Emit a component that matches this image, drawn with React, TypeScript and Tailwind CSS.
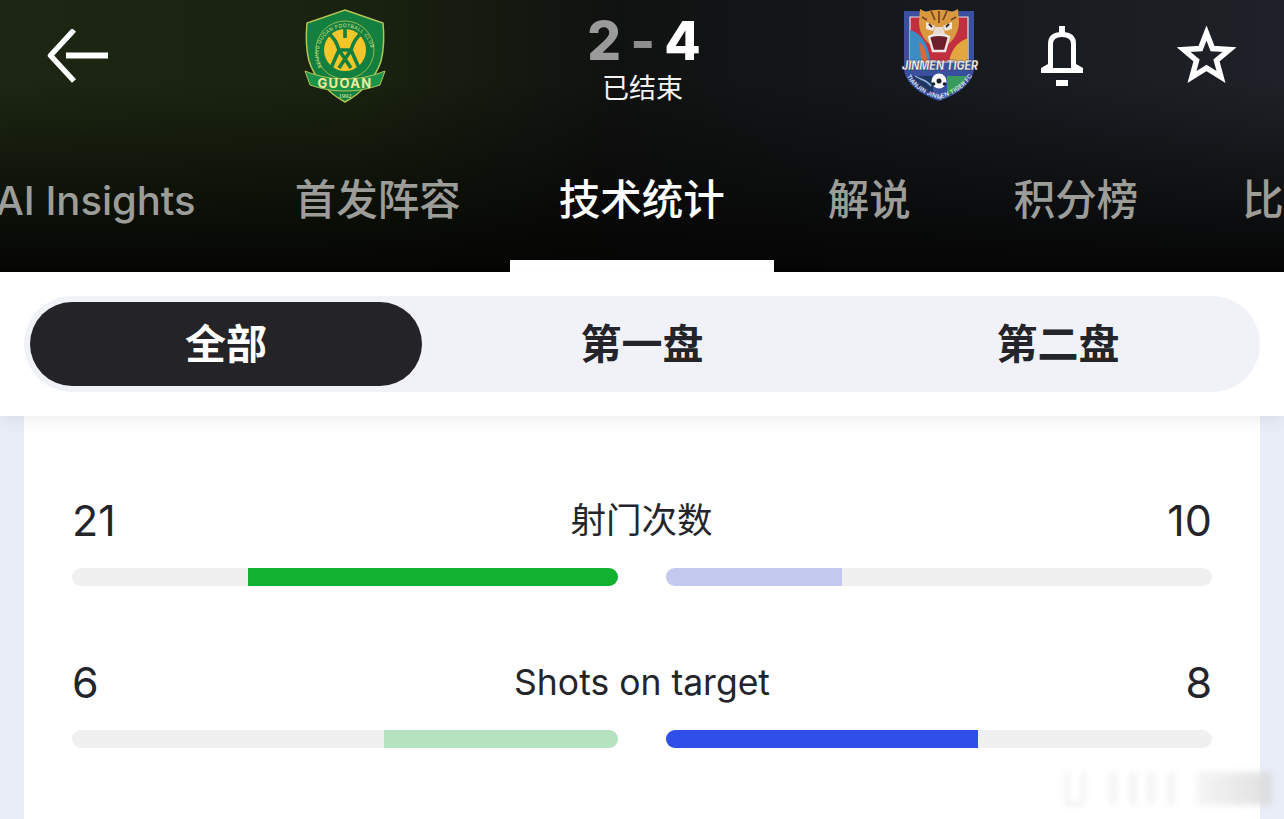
import React from "react";

const FONT = "font-['Inter','Noto_Sans_CJK_SC',sans-serif]";

function GuoanCrest() {
  return (
    <svg width="84" height="96" viewBox="0 0 84 96" className="block">
      <path d="M41 1 L79 14 C80 24 80 40 77 52 C72 68 58 84 41 93 C24 84 10 68 5 52 C2 40 2 24 3 14 Z" fill="#14803f" stroke="#b4c554" strokeWidth="1.5" />
      <circle cx="41" cy="41" r="29" fill="none" stroke="#b4c554" strokeWidth=".8" />
      <circle cx="41" cy="41" r="21" fill="#f5c629" />
      <path d="M24 24 C31 29 33 35 35 41 L27 59 M58 24 C51 29 49 35 47 41 L55 59 M35 41 L47 59 M47 41 L35 59 M35 41 H47 M41 20 V29" fill="none" stroke="#14803f" strokeWidth="3.600" />
      <defs>
        <path id="guoan-arc" d="M18 58 A26.500 26.500 0 1 1 64 58" />
      </defs>
      <text fontFamily="Inter, sans-serif" fontSize="5" fill="#d8e583" letterSpacing=".35">
        <textPath href="#guoan-arc" startOffset="0">BEIJING GUOAN FOOTBALL CLUB</textPath>
      </text>
      <path d="M1 62 C16 68 28 70 41 70 C54 70 66 68 81 62 L76 76 C64 80 54 82 41 82 C28 82 18 80 6 76 Z" fill="#1c9348" stroke="#b4c554" strokeWidth="1" />
      <text x="41" y="79" textAnchor="middle" fontFamily="Inter, sans-serif" fontWeight="700" fontSize="13" letterSpacing="1.300" fill="#f1ee9e">GUOAN</text>
      <text x="41" y="89" textAnchor="middle" fontFamily="'Liberation Serif', serif" fontSize="6.500" fill="#e8eda8">1992</text>
    </svg>
  );
}

function TigerCrest() {
  return (
    <svg width="82" height="96" viewBox="0 0 82 96" className="block">
      <path d="M5 3 H75 V62 C73 76 58 87 40 93 C22 87 7 76 5 62 Z" fill="#3a4f9d" />
      <path d="M11 9 H69 V54 H11 Z" fill="#c22f3e" stroke="#e5e2e8" strokeWidth="1.200" />
      <path d="M11 22 C24 26 30 38 31 54 H11 Z" fill="#3b8dc4" />
      <path d="M69 30 V54 H50 C52 42 58 34 69 30 Z" fill="#e4a63e" />
      <path d="M20 34 C26 38 28 46 28 54 H22 C22 46 21 40 20 34 Z" fill="#d66a3a" />
      <path d="M48 68 H68 C66 76 58 84 48 87 Z" fill="#3a9a5c" />
      <path d="M13 68 H34 V86 C24 82 15 76 13 68 Z" fill="#1f3564" />
      <path d="M16 68 C22 72 28 72 32 78" fill="none" stroke="#8fb6d8" strokeWidth="1.500" />
      <path d="M21 1 L27 4 C33 1 47 1 53 4 L59 1 L60 14 C60 27 51 38 40 41 C29 38 20 27 20 14 Z" fill="#d9993f" />
      <path d="M27 14 L36 18 L34 23 L27 21 Z M53 14 L44 18 L46 23 L53 21 Z" fill="#efe6e2" />
      <path d="M30 16 L33 19 M50 16 L47 19" stroke="#3a2a2a" strokeWidth="1.800" />
      <path d="M32 3 L36 12 M48 3 L44 12 M40 3 V15 M23 9 L28 12 M57 9 L52 12" stroke="#7a4524" strokeWidth="1.800" />
      <path d="M30 29 C34 26 46 26 50 29 L46 43 H34 Z" fill="#6d1f2c" stroke="#efe7e4" strokeWidth="2.400" />
      <path d="M36 19 H44 L46 26 H34 Z" fill="#e8dcd4" />
      <text x="41" y="62" textAnchor="middle" fontFamily="Inter, sans-serif" fontStyle="italic" fontWeight="800" fontSize="13" textLength="76" lengthAdjust="spacingAndGlyphs" fill="#f4f0ea" stroke="#25273a" strokeWidth=".3">JINMEN TIGER</text>
      <circle cx="40" cy="73" r="7.500" fill="#f6f6f6" />
      <circle cx="40" cy="73" r="2.500" fill="#1a1d2a" />
      <circle cx="34.500" cy="76" r="1.800" fill="#1a1d2a" />
      <circle cx="45.500" cy="76" r="1.800" fill="#1a1d2a" />
      <defs>
        <path id="tiger-arc" d="M7 66 C12 79 26 87 40 91 C54 87 68 79 74 66" />
      </defs>
      <text fontFamily="Inter, sans-serif" fontWeight="600" fontSize="6" letterSpacing=".2" fill="#dfe4f2">
        <textPath href="#tiger-arc" startOffset="2">TIANJIN JINMEN TIGER FC</textPath>
      </text>
    </svg>
  );
}

function BackIcon() {
  return (
    <svg width="64" height="56" viewBox="0 0 64 56" className="block">
      <path d="M28 1 L4.500 26.500 L28 52" fill="none" stroke="#fff" strokeWidth="5.500" strokeLinejoin="round" />
      <path d="M20 26.500 H62" stroke="#fff" strokeWidth="6" />
    </svg>
  );
}

function BellIcon() {
  return (
    <svg width="44" height="62" viewBox="0 0 44 62" className="block">
      <path d="M19 0 H25 V7 H19 Z M16 54 H28 V60 H16 Z" fill="#fff" />
      <path d="M10.500 40 V18 C10.500 11 15 8.500 22 8.500 C29 8.500 33.500 11 33.500 18 V40" fill="none" stroke="#fff" strokeWidth="5" />
      <path d="M8 38 H13 V42 H31 V38 H36 L43 42 V47 H1 V42 Z" fill="#fff" />
    </svg>
  );
}

function StarIcon() {
  return (
    <svg width="60" height="58" viewBox="0 0 60 58" className="block">
      <path d="M29.500 7 L35.500 22.500 L52.500 23.500 L39.500 34.500 L44 51 L29.500 42 L15 51 L19.500 34.500 L6.500 23.500 L23.500 22.500 Z" fill="none" stroke="#fff" strokeWidth="5.500" strokeLinejoin="miter" />
    </svg>
  );
}

function StatBar({ left, right, label, leftFill, rightFill, leftColor, rightColor }: {
  left: string; right: string; label: string; leftFill: number; rightFill: number; leftColor: string; rightColor: string;
}) {
  return (
    <div className="flex flex-col">
      <div className="flex h-[44px] items-center justify-between text-[43px] leading-none text-[#24252b]">
        <span className="mt-[-2px]">{left}</span>
        <span className="text-[35.500px]">{label}</span>
        <span className="mt-[-2px]">{right}</span>
      </div>
      <div className="mt-[25px] flex gap-[48px]">
        <div className="flex h-[18px] flex-1 justify-end overflow-hidden rounded-[9px] bg-[#f0f0f0]">
          <div className={leftColor} style={{ width: `${leftFill}%` }} />
        </div>
        <div className="flex h-[18px] flex-1 overflow-hidden rounded-[9px] bg-[#f0f0f0]">
          <div className={rightColor} style={{ width: `${rightFill}%` }} />
        </div>
      </div>
    </div>
  );
}

export default function App() {
  const tabs = [
    { t: "AI Insights", on: false, c: "pl-[49px] pr-[49px] text-[40px]" },
    { t: "首发阵容", on: false, c: "pl-[50px] pr-[49px] text-[41.500px]" },
    { t: "技术统计", on: true, c: "pl-[49px] pr-[49px] text-[41.500px]" },
    { t: "解说", on: false, c: "pl-[54px] pr-[52px] text-[41.500px]" },
    { t: "积分榜", on: false, c: "pl-[51px] pr-[52px] text-[41.500px]" },
    { t: "比赛", on: false, c: "pl-[52px] pr-[0px] text-[41.500px]" },
  ];
  return (
    <div className={`relative h-[819px] w-[1284px] overflow-hidden bg-[#e9edf7] ${FONT}`}>
      <header className="flex h-[272px] flex-col bg-[linear-gradient(to_bottom,rgba(0,0,0,0)_0%,rgba(0,0,0,0)_30%,rgba(4,4,3,0.94)_100%),linear-gradient(to_right,#1c2612_0%,#19220f_28%,#101211_48%,#15181c_70%,#1e2228_100%)]">
        <div className="flex h-[116px] shrink-0 items-start">
          <div className="ml-[46px] mt-[29px] w-[64px]"><BackIcon /></div>
          <div className="ml-[194px] mt-[9px]"><GuoanCrest /></div>
          <div className="ml-[200px] flex w-[112px] flex-col items-center">
            <div className="mt-[13px] flex h-[56px] items-center text-[53px] font-extrabold leading-none">
              <span className="text-[#9a9a9a]">2</span>
              <span className="mx-[9px] text-[#8e8e8e]">-</span>
              <span className="text-white">4</span>
            </div>
            <div className="ml-[-3px] mt-[2px] text-[27px] leading-[36px] text-[#f3f3f3]">已结束</div>
          </div>
          <div className="ml-[199px] mt-[8px]"><TigerCrest /></div>
          <div className="ml-[59px] mt-[26px]"><BellIcon /></div>
          <div className="ml-[93px] mt-[26px]"><StarIcon /></div>
        </div>
        <nav className="ml-[-53.500px] mt-auto flex h-[156px] shrink-0 items-stretch whitespace-nowrap">
          {tabs.map((x) => (
            <div key={x.t} className={`relative flex items-center ${x.c}`}>
              <span className={`mt-[13px] font-medium leading-none ${x.on ? "text-white" : "text-[#9c9d99]"}`}>{x.t}</span>
              {x.on && <div className="absolute bottom-0 left-0 right-0 h-[12px] bg-white" />}
            </div>
          ))}
        </nav>
      </header>

      <section className="relative z-10 h-[144px] bg-white px-[24px] pt-[24px] shadow-[0_6px_14px_rgba(0,0,0,0.06)]">
        <div className="flex h-[96px] gap-[24px] rounded-[48px] bg-[#f1f2f7] p-[6px]">
          <div className="flex h-[84px] w-[392px] items-center justify-center rounded-[42px] bg-[#232328] text-[41px] font-bold leading-none text-white">全部</div>
          <div className="flex h-[84px] w-[392px] items-center justify-center text-[41px] font-bold leading-none text-[#24252b]">第一盘</div>
          <div className="flex h-[84px] w-[392px] items-center justify-center text-[41px] font-bold leading-none text-[#24252b]">第二盘</div>
        </div>
      </section>

      <main className="mx-[24px] h-[403px] bg-white px-[48px] pt-[83px]">
        <StatBar left="21" right="10" label="射门次数" leftFill={67.770} rightFill={32.230} leftColor="bg-[#12b12f]" rightColor="bg-[#c3c8ee]" />
        <div className="h-[75px]" />
        <StatBar left="6" right="8" label="Shots on target" leftFill={42.860} rightFill={57.140} leftColor="bg-[#b5e3c0]" rightColor="bg-[#2f4fe8]" />
      </main>

      <div className="absolute left-[1066px] top-[772px] flex h-[33px] w-[206px] items-stretch opacity-80 blur-[3px]">
        <div className="w-[18px] border-x-2 border-b-2 border-[#dcdcdc] bg-white" />
        <div className="ml-[26px] w-[6px] bg-[#efefef]" />
        <div className="ml-[14px] w-[6px] bg-[#efefef]" />
        <div className="ml-[12px] w-[6px] bg-[#efefef]" />
        <div className="ml-[14px] w-[6px] bg-[#efefef]" />
        <div className="ml-[22px] flex-1 bg-[linear-gradient(to_right,#f4f4f4,#d8d8d8)]" />
      </div>
    </div>
  );
}
